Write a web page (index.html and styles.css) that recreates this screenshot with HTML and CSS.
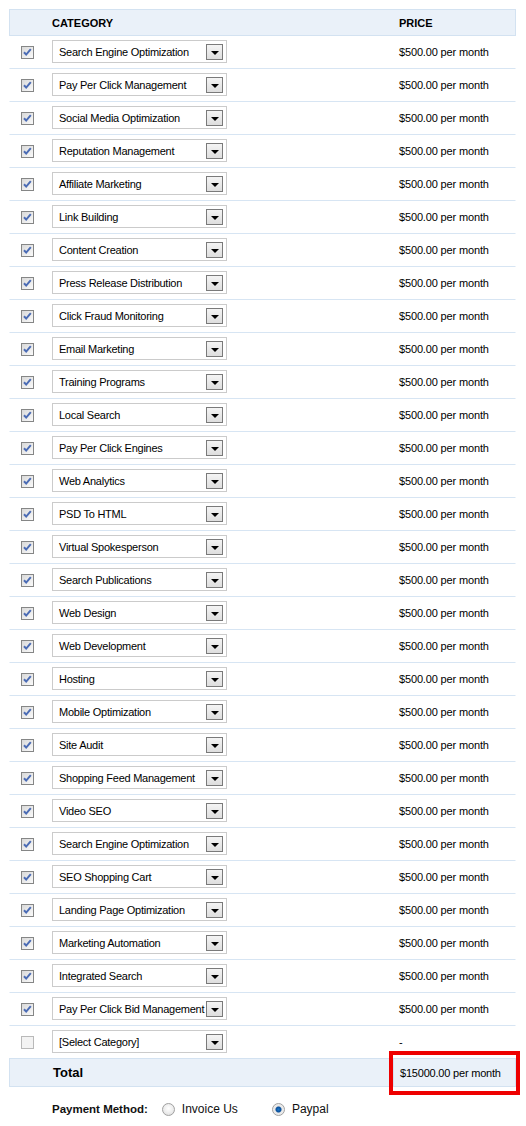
FILE: index.html
```html
<!DOCTYPE html>
<html>
<head>
<meta charset="utf-8">
<link rel="stylesheet" href="styles.css">
</head>
<body>
<div class="table">
  <div class="row head">
    <div class="c1"></div>
    <div class="c2">CATEGORY</div>
    <div class="c3">PRICE</div>
  </div>
  <div id="rows"></div>
  <div class="row total">
    <div class="c1"></div>
    <div class="c2">Total</div>
    <div class="c3 tprice">$15000.00 per month<span class="mark"></span></div>
  </div>
</div>
<div class="payment">
  <span class="plabel">Payment Method:</span>
  <span class="radio"></span><span class="ropt">Invoice Us</span>
  <span class="radio on"></span><span class="ropt">Paypal</span>
</div>
<script src="app.js"></script>
</body>
</html>
```
FILE: app.js
```js
var items = ["Search Engine Optimization","Pay Per Click Management","Social Media Optimization","Reputation Management","Affiliate Marketing","Link Building","Content Creation","Press Release Distribution","Click Fraud Monitoring","Email Marketing","Training Programs","Local Search","Pay Per Click Engines","Web Analytics","PSD To HTML","Virtual Spokesperson","Search Publications","Web Design","Web Development","Hosting","Mobile Optimization","Site Audit","Shopping Feed Management","Video SEO","Search Engine Optimization","SEO Shopping Cart","Landing Page Optimization","Marketing Automation","Integrated Search","Pay Per Click Bid Management"];
var check = '<svg class="cb" width="13" height="13" viewBox="0 0 13 13"><defs><linearGradient id="g" x1="0" y1="0" x2="1" y2="1"><stop offset="0" stop-color="#d8d8d8"/><stop offset="1" stop-color="#fbfbfb"/></linearGradient></defs><rect x="0.5" y="0.5" width="12" height="12" fill="url(#g)" stroke="#858686"/><path d="M3 6.2 L5.2 8.6 L9.8 3.2" fill="none" stroke="#4b6cb5" stroke-width="2"/></svg>';
var empty = '<svg class="cb" width="13" height="13" viewBox="0 0 13 13"><rect x="0.5" y="0.5" width="12" height="12" fill="#f3f3f3" stroke="#b9b9b9"/></svg>';
function row(label, checked, price) {
  return '<div class="row"><div class="c1">' + (checked ? check : empty) + '</div><div class="c2"><div class="sel"><span class="sl">' + label + '</span><span class="btn"><i></i></span></div></div><div class="c3">' + price + '</div></div>';
}
var h = "";
items.forEach(function (t) { h += row(t, true, "$500.00 per month"); });
h += row("[Select Category]", false, "-");
document.getElementById("rows").innerHTML = h;
```
FILE: styles.css
```css
html, body { margin: 0; padding: 0; background: #fff; }
body { font-family: "Liberation Sans", Arial, sans-serif; font-size: 11px; color: #000; }
.table { margin: 9px 0 0 9px; width: 507px; }
.row { display: grid; grid-template-columns: 36px 347px 1fr; height: 33px; box-sizing: border-box; border: 1px solid transparent; border-top: 0; border-bottom: 1px solid #d7e5f3; align-items: center; }
.row > div { padding-left: 6px; box-sizing: border-box; height: 100%; display: flex; align-items: center; }
.row > .c1 { padding-left: 11px; }
.row .c3 { letter-spacing: -0.15px; }
.head { height: 27px; border: 1px solid #d3e2f1; background: #eaf1f9; font-weight: bold; font-size: 11px; }
.head .c3 { letter-spacing: 0; }
.cb { display: block; }
.sel { width: 175px; height: 23px; box-sizing: border-box; border: 1px solid #cbcbcb; background: #fff; display: flex; align-items: center; justify-content: space-between; padding-left: 6px; padding-right: 3px; margin-top: -1px; }
.sl { white-space: nowrap; letter-spacing: -0.25px; padding-top: 1px; }
.btn { flex: none; width: 17px; height: 16px; box-sizing: border-box; border: 1px solid #7a7a7a; background: linear-gradient(#f4f4f4, #dedede); display: flex; align-items: center; justify-content: center; }
.btn i { width: 0; height: 0; border-left: 4px solid transparent; border-right: 4px solid transparent; border-top: 4px solid #000; margin-top: 2px; }
.total { height: 29px; border: 1px solid #d3e2f1; background: #eaf1f9; margin-top: -1px; }
.total .c2 { font-weight: bold; font-size: 13px; padding-left: 7px; }
.total .tprice { border-left: 1px solid #d3e2f1; position: relative; letter-spacing: -0.2px; }
.mark { position: absolute; left: -5px; right: -5px; top: -8px; bottom: -9px; border: 4px solid #ee0000; }
.payment { display: flex; align-items: center; margin: 14px 0 0 52px; height: 16px; font-size: 12px; }
.plabel { font-weight: bold; font-size: 11.5px; color: #111; margin-right: 14px; }
.radio { width: 13px; height: 13px; box-sizing: border-box; border-radius: 50%; border: 1px solid #a0a0a0; background: radial-gradient(circle at 50% 40%, #fff 0, #ececec 55%, #d6d6d6 100%); margin-right: 7px; }
.radio.on { background: radial-gradient(circle, #1d78c8 0, #0a4f9a 2.5px, #e6e6e6 3.5px, #f5f5f5 100%); }
.ropt { margin-right: 34px; color: #111; }
```
